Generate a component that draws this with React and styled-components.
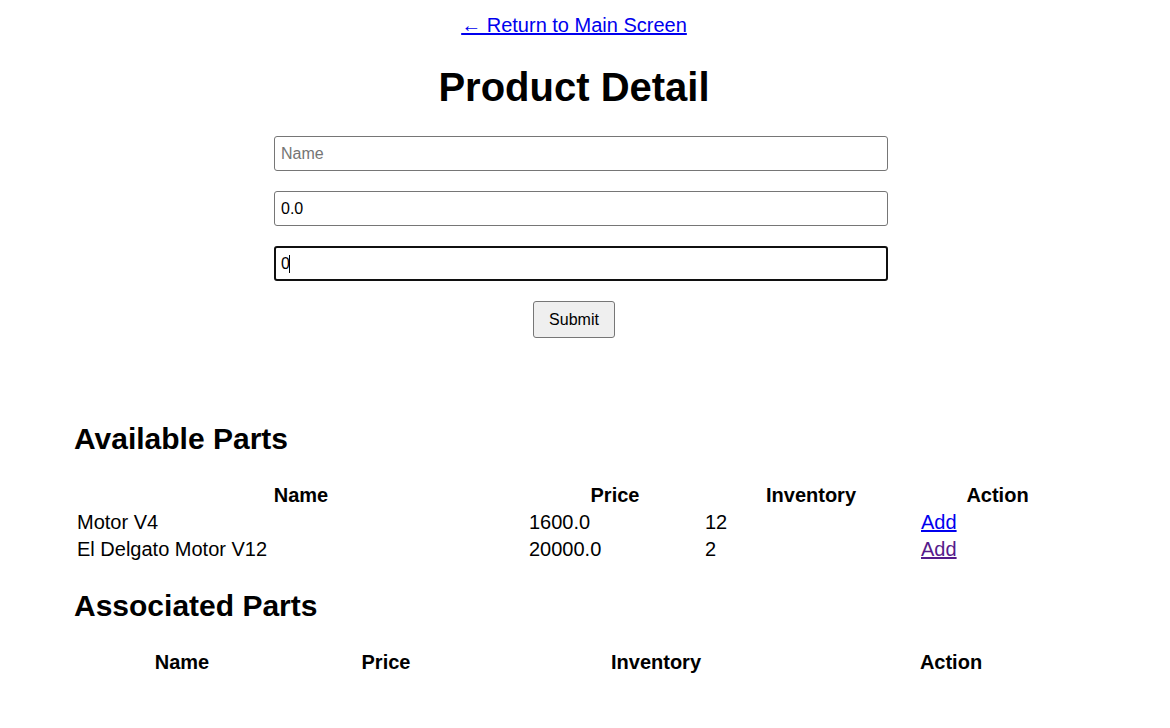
import React from 'react'
import styled, { createGlobalStyle } from 'styled-components'

const GlobalStyle = createGlobalStyle`
    body{
        margin: 0;
        background: #fff;
        color: #000;
        font-family: 'Liberation Sans', Arial, sans-serif;
    }
`

const Page = styled.div`
    padding: 14px 0 40px;
`

const Top = styled.header`
    display: flex;
    flex-direction: column;
    align-items: center;
    padding-right: 22px;
`

const BackLink = styled.a`
    font-size: 20px;
    line-height: 23px;
    color: #0000ee;
    text-decoration: underline;
`

const Title = styled.h1`
    margin: 27px 0 0;
    font-size: 40px;
    line-height: 46px;
    font-weight: 700;
`

const Form = styled.form`
    display: flex;
    flex-direction: column;
    gap: 20px;
    width: 614px;
    margin: 26px 0 0 274px;
`

const Field = styled.div`
    position: relative;
`

const Input = styled.input`
    display: block;
    box-sizing: border-box;
    width: 100%;
    height: 35px;
    padding: 0 6px;
    font-family: 'Liberation Sans', Arial, sans-serif;
    font-size: 16px;
    color: #000;
    border: ${p => p.$active ? '2px solid #101010' : '1px solid #767676'};
    padding-left: ${p => p.$active ? '5px' : '6px'};
    border-radius: 3px;
    outline: none;
    caret-color: transparent;

    &::placeholder{
        color: #757575;
    }
`

const Caret = styled.span`
    position: absolute;
    left: 15px;
    top: 9px;
    width: 1px;
    height: 18px;
    background: #000;
`

const ButtonRow = styled.div`
    display: flex;
    justify-content: center;
    padding-right: 14px;
`

const SubmitButton = styled.button`
    height: 37px;
    padding: 0 15px;
    font-family: 'Liberation Sans', Arial, sans-serif;
    font-size: 16px;
    color: #000;
    background: #efefef;
    border: 1px solid #767676;
    border-radius: 3px;
`

const Section = styled.section`
    margin: ${p => p.$top} 0 0 74px;
    width: 1002px;
`

const Heading = styled.h2`
    margin: 0;
    font-size: 30px;
    line-height: 35px;
    font-weight: 700;
`

const Table = styled.table`
    margin-top: ${p => p.$gap};
    table-layout: fixed;
    width: ${p => p.$width}px;
    border-spacing: 2px;
    font-size: 20px;
    line-height: 23px;

    th{
        padding: 1px;
        font-weight: 700;
        text-align: center;
    }
    td{
        padding: 1px;
        text-align: left;
    }
`

const Col = styled.col`
    width: ${p => p.$w}px;
`

const AddLink = styled.a`
    color: ${p => p.$visited ? '#551a8b' : '#0000ee'};
    text-decoration: underline;
`

const parts = [
    { name: 'Motor V4', price: '1600.0', inv: '12' },
    { name: 'El Delgato Motor V12', price: '20000.0', inv: '2' },
]

function PartsHead({ widths }) {
    return (
        <>
            <colgroup>
                {widths.map((w, i) => <Col key={i} $w={w} />)}
            </colgroup>
            <thead>
                <tr>
                    <th>Name</th>
                    <th>Price</th>
                    <th>Inventory</th>
                    <th>Action</th>
                </tr>
            </thead>
        </>
    )
}

function App() {
    return (
        <Page>
            <GlobalStyle />
            <Top>
                <BackLink href="#">← Return to Main Screen</BackLink>
                <Title>Product Detail</Title>
            </Top>
            <Form onSubmit={e => e.preventDefault()}>
                <Input type="text" placeholder="Name" />
                <Input type="text" defaultValue="0.0" />
                <Field>
                    <Input type="text" defaultValue="0" $active />
                    <Caret />
                </Field>
                <ButtonRow>
                    <SubmitButton type="submit">Submit</SubmitButton>
                </ButtonRow>
            </Form>

            <Section $top="83px">
                <Heading>Available Parts</Heading>
                <Table $width={1002} $gap="24.5px">
                    <PartsHead widths={[450, 174, 214, 155]} />
                    <tbody>
                        {parts.map((p, i) => (
                            <tr key={p.name}>
                                <td>{p.name}</td>
                                <td>{p.price}</td>
                                <td>{p.inv}</td>
                                <td><AddLink href="#" $visited={i === 1}>Add</AddLink></td>
                            </tr>
                        ))}
                    </tbody>
                </Table>
            </Section>

            <Section $top="24.5px">
                <Heading>Associated Parts</Heading>
                <Table $width={1000} $gap="24.5px">
                    <PartsHead widths={[212, 192, 344, 242]} />
                    <tbody></tbody>
                </Table>
            </Section>
        </Page>
    )
}

export default App
